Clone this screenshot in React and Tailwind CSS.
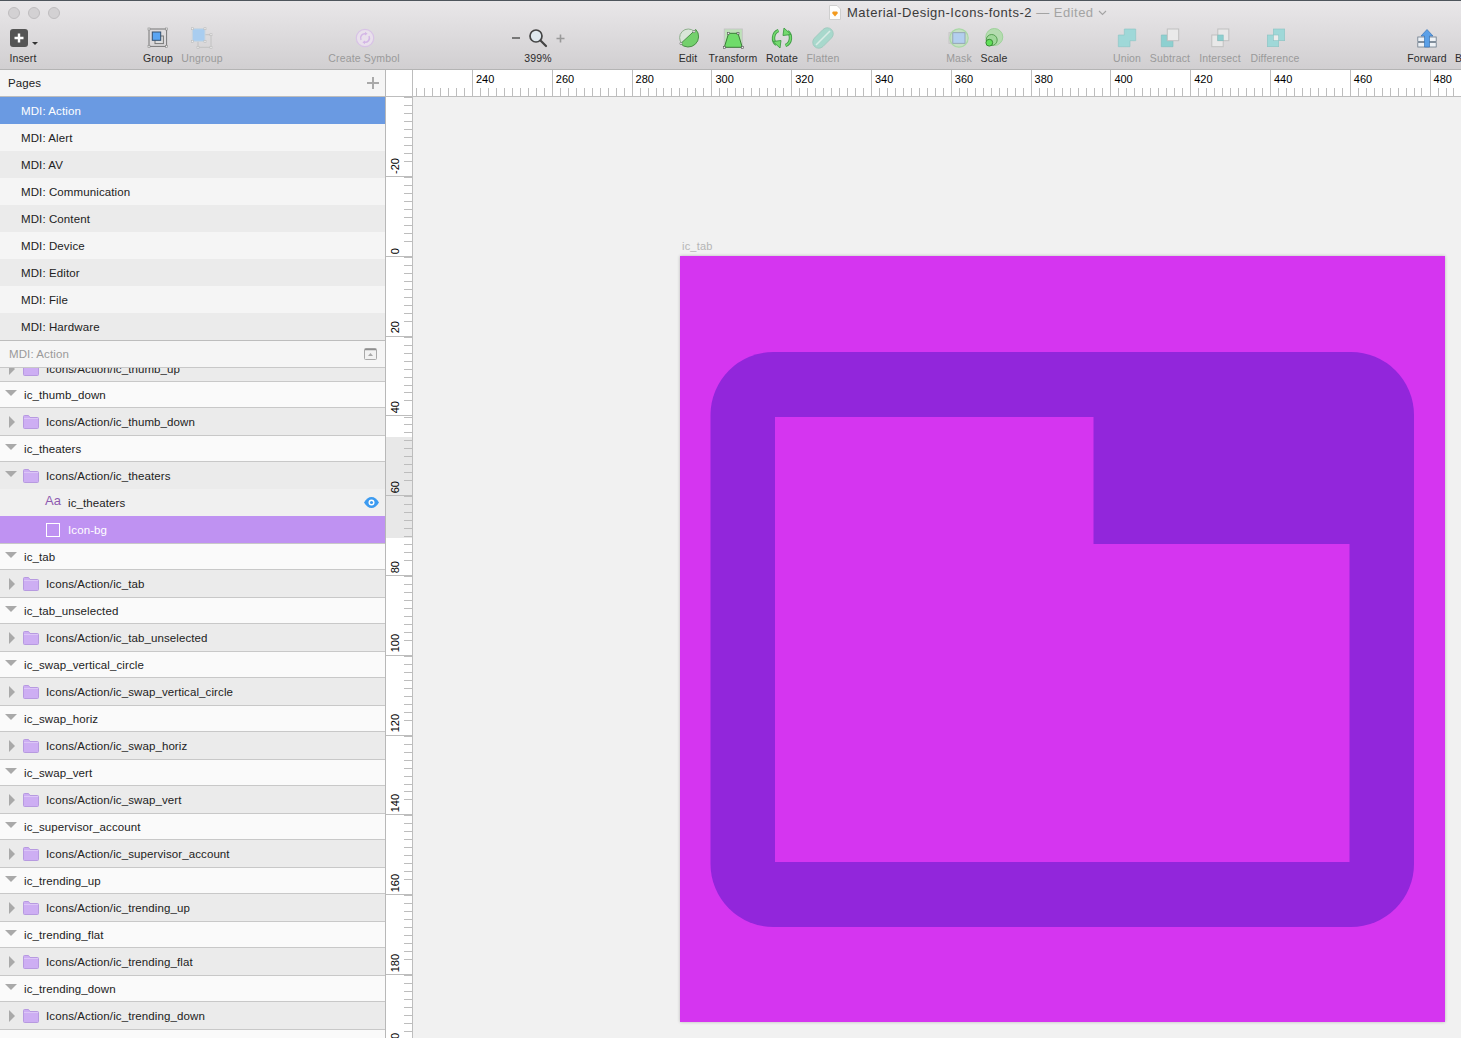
import React from "react";

const font = "font-['Liberation_Sans',Arial,sans-serif]";

const pages = ["MDI: Action", "MDI: Alert", "MDI: AV", "MDI: Communication", "MDI: Content", "MDI: Device", "MDI: Editor", "MDI: File", "MDI: Hardware"];

const layersBefore = ["ic_thumb_down"];
const layersAfter = ["ic_tab", "ic_tab_unselected", "ic_swap_vertical_circle", "ic_swap_horiz", "ic_swap_vert", "ic_supervisor_account", "ic_trending_up", "ic_trending_flat", "ic_trending_down"];

const Handle = ({ x, y, c = "#8a8a8a" }) => <rect x={x - 1} y={y - 1} width="2" height="2" fill="#eee" stroke={c} strokeWidth="0.6" />;

const InsertIcon = () => (
  <svg width="30" height="24" viewBox="0 0 30 24">
    <rect x="2" y="3" width="18" height="18" rx="3" fill="#555" />
    <path d="M11 7.5v9M6.5 12h9" stroke="#fff" strokeWidth="2.4" />
    <path d="M24 16h6l-3 3z" fill="#333" />
  </svg>
);

const GroupIcon = () => (
  <svg width="24" height="24" viewBox="0 0 24 24">
    <rect x="3" y="3" width="17.6" height="17.4" fill="none" stroke="#777" />
    <rect x="9" y="10" width="8.4" height="7.6" fill="#ddd" stroke="#777" />
    <rect x="6.3" y="6" width="8.4" height="8.3" fill="#5aa5f2" stroke="#35506e" />
    <Handle x={3} y={3} /><Handle x={20.6} y={3} /><Handle x={3} y={20.4} /><Handle x={20.6} y={20.4} />
  </svg>
);

const UngroupIcon = () => (
  <svg width="24" height="24" viewBox="0 0 24 24">
    <rect x="8" y="8.7" width="13" height="12.6" fill="none" stroke="#c2c2c2" />
    <rect x="2.3" y="2.7" width="12.7" height="12.6" fill="#a9cdf0" stroke="#c9d4de" />
    <Handle x={2.3} y={2.7} c="#bbb" /><Handle x={15} y={2.7} c="#bbb" /><Handle x={2.3} y={15.3} c="#bbb" /><Handle x={15} y={15.3} c="#bbb" />
    <Handle x={21} y={8.7} c="#bbb" /><Handle x={8} y={21.3} c="#bbb" /><Handle x={21} y={21.3} c="#bbb" />
  </svg>
);

const SymbolIcon = () => (
  <svg width="24" height="24" viewBox="0 0 24 24" fill="none">
    <circle cx="13" cy="12" r="8.7" fill="#e9e0ec" stroke="#d8c3e6" strokeWidth="1.2" />
    <path d="M9 14a4.4 4.4 0 0 1 5-6.2M17 10a4.4 4.4 0 0 1-5 6.2" stroke="#d3b6e6" strokeWidth="1.5" />
    <path d="M13 5.8l2.6 2-2.6 1.8zM13 18.2l-2.6-2 2.6-1.8z" fill="#d3b6e6" />
  </svg>
);

const ZoomIcon = () => (
  <div className="flex items-center h-6 text-[#777]">
    <div className="w-2 h-0.5 bg-[#777]" />
    <svg className="mx-2" width="20" height="20" viewBox="0 0 20 20" fill="none">
      <circle cx="8" cy="8" r="6" fill="#dfe8ee" stroke="#444" strokeWidth="1.7" />
      <path d="M12.5 12.5l5.5 5.5" stroke="#444" strokeWidth="2.2" strokeLinecap="round" />
    </svg>
    <svg width="9" height="9" viewBox="0 0 9 9"><path d="M4.5 0.5v8M0.5 4.5h8" stroke="#999" strokeWidth="1.6" /></svg>
  </div>
);

const EditIcon = () => (
  <svg width="24" height="24" viewBox="0 0 24 24">
    <circle cx="12.3" cy="11.7" r="8.7" fill="#d9e6d8" stroke="#8fb08d" strokeWidth="1" />
    <path d="M4.6 17.7L19.8 3.5A8.7 8.7 0 0 1 4.6 17.7z" fill="#73d06c" stroke="#4a8f47" strokeWidth="1" />
    <circle cx="5" cy="17.5" r="1.2" fill="#eee" stroke="#666" strokeWidth="0.6" />
    <circle cx="18" cy="5.5" r="1.2" fill="#eee" stroke="#666" strokeWidth="0.6" />
  </svg>
);

const TransformIcon = () => (
  <svg width="24" height="24" viewBox="0 0 24 24">
    <rect x="3.3" y="3" width="18" height="18.3" fill="#bde2b8" stroke="#c5c5c5" />
    <path d="M7.6 7.3h9.4l4.3 14H3.3z" fill="#6fdc6a" stroke="#2f6f2d" strokeWidth="0.9" />
    <Handle x={7.6} y={7.3} c="#555" /><Handle x={17} y={7.3} c="#555" /><Handle x={3.3} y={21.3} c="#555" /><Handle x={21.3} y={21.3} c="#555" />
  </svg>
);

const RotateIcon = () => (
  <svg width="24" height="24" viewBox="0 0 24 24" fill="none">
    <path d="M8.5 4.5C2.5 7 2 15 6.5 18.5" stroke="#3f9b45" strokeWidth="3.4" />
    <path d="M8.5 4.5C2.5 7 2 15 6.5 18.5" stroke="#74da6e" strokeWidth="1.6" />
    <path d="M3 15.5l8 -1l-1 7.5z" fill="#74da6e" stroke="#3f9b45" strokeWidth="0.9" />
    <path d="M15.5 19.5C21.5 17 22 9 17.5 5.5" stroke="#3f9b45" strokeWidth="3.4" />
    <path d="M15.5 19.5C21.5 17 22 9 17.5 5.5" stroke="#74da6e" strokeWidth="1.6" />
    <path d="M21 8.5l-8 1l1 -7.5z" fill="#74da6e" stroke="#3f9b45" strokeWidth="0.9" />
  </svg>
);

const FlattenIcon = () => (
  <svg width="24" height="24" viewBox="0 0 24 24">
    <rect x="0" y="6" width="24" height="12" rx="6" transform="rotate(-45 12 12)" fill="#a8d8cc" stroke="#9cc8bc" strokeWidth="0.8" />
    <path d="M5 19L19 5" stroke="#d9ece6" strokeWidth="1.6" />
  </svg>
);

const MaskIcon = () => (
  <svg width="24" height="24" viewBox="0 0 24 24">
    <rect x="2" y="6.7" width="14" height="10.6" fill="#ddd" stroke="#c5c5c5" />
    <circle cx="12" cy="12" r="9.2" fill="#c6e0c4" stroke="#a9d8a6" strokeWidth="1.2" />
    <rect x="5.8" y="6.7" width="12.2" height="10.6" fill="#b3cfee" stroke="#8a9bae" strokeWidth="0.8" />
  </svg>
);

const ScaleIcon = () => (
  <svg width="24" height="24" viewBox="0 0 24 24">
    <circle cx="12.3" cy="11" r="8.5" fill="#b5dcb0" stroke="#9ed29a" />
    <circle cx="9.7" cy="14" r="5.5" fill="#a0d89a" stroke="#4e9a4a" strokeWidth="0.9" />
    <circle cx="7.3" cy="16.7" r="3.4" fill="#62e05a" stroke="#2f7f2c" strokeWidth="0.9" />
  </svg>
);

const UnionIcon = () => (
  <svg width="24" height="24" viewBox="0 0 24 24">
    <path d="M9.3 3h11.4v11.7H15v6H3.3V9h6z" fill="#9fd8d8" stroke="#8cc4c4" strokeWidth="0.6" />
  </svg>
);

const SubtractIcon = () => (
  <svg width="24" height="24" viewBox="0 0 24 24">
    <path d="M3.3 9h6v5.7H15v6H3.3z" fill="#8dd0d0" stroke="#7fbcbc" strokeWidth="0.6" />
    <rect x="9.3" y="3" width="11.4" height="11.7" fill="#eaeaea" stroke="#c0c0c0" />
  </svg>
);

const IntersectIcon = () => (
  <svg width="24" height="24" viewBox="0 0 24 24">
    <rect x="3.8" y="9" width="11.4" height="11.7" fill="#e8e8e8" stroke="#c0c0c0" />
    <rect x="9.8" y="3" width="11" height="11.7" fill="#e8e8e8" stroke="#c0c0c0" />
    <rect x="9.8" y="9" width="5.4" height="5.7" fill="#8dd0d0" stroke="#7fbcbc" strokeWidth="0.6" />
  </svg>
);

const DifferenceIcon = () => (
  <svg width="24" height="24" viewBox="0 0 24 24">
    <rect x="4.3" y="9" width="11.4" height="11.7" fill="#9fd8d8" stroke="#8cc4c4" strokeWidth="0.6" />
    <rect x="10.3" y="3" width="11.4" height="11.7" fill="#9fd8d8" stroke="#8cc4c4" strokeWidth="0.6" />
    <rect x="10.3" y="9" width="5.4" height="5.7" fill="#ececec" stroke="#8cc4c4" strokeWidth="0.6" />
  </svg>
);

const ForwardIcon = () => (
  <svg width="24" height="24" viewBox="0 0 24 24">
    <rect x="2.8" y="11" width="18.4" height="4.4" fill="#eef2f6" stroke="#6a7a8a" strokeWidth="0.8" />
    <rect x="2.8" y="16.6" width="18.4" height="4.4" fill="#eef2f6" stroke="#6a7a8a" strokeWidth="0.8" />
    <path d="M12 3.5l6 6.5h-3.5v11h-5V10H6z" fill="#5aa0e8" stroke="#3a74b4" strokeWidth="0.7" />
  </svg>
);

const ToolItem = ({ label, w, ml, dim, children }) => (
  <div className={`${w} ${ml} shrink-0 flex flex-col items-center`}>
    <div className="h-6 flex items-center justify-center">{children}</div>
    <div className={`mt-px text-[10.5px] leading-[14px] tracking-[0.15px] whitespace-nowrap ${dim ? "text-[#9a9a9a]" : "text-[#2c2c2c]"}`}>{label}</div>
  </div>
);

const Toolbar = () => (
  <div className="h-[70px] shrink-0 border-b border-[#b4b4b4] border-t border-t-[#4e555c] bg-gradient-to-b from-[#e9e7e9] to-[#d1cfd1] overflow-hidden">
    <div className="h-[25px] flex items-center">
      <div className="flex gap-2 ml-2 -mt-0.5">
        <div className="w-3 h-3 rounded-full bg-[#d3d1d3] border border-[#bfbdbf]" />
        <div className="w-3 h-3 rounded-full bg-[#d3d1d3] border border-[#bfbdbf]" />
        <div className="w-3 h-3 rounded-full bg-[#d3d1d3] border border-[#bfbdbf]" />
      </div>
      <svg className="ml-[769px] -mt-0.5" width="12" height="15" viewBox="0 0 12 15">
        <path d="M0.5 0.5h7.5l3.5 3.5v10.500h-11z" fill="#fdfdfd" stroke="#cfcfcf" />
        <path d="M3 8l1-1.500h4l1 1.500l-3 3.500z" fill="#f39a1d" />
      </svg>
      <div className="ml-[6px] -mt-0.5 text-[13px] tracking-[0.5px] text-[#3a3a3a] whitespace-nowrap">
        Material-Design-Icons-fonts-2 <span className="text-[#a3a3a3]">— Edited</span>
      </div>
      <svg className="ml-1 -mt-0.5" width="9" height="6" viewBox="0 0 9 6" fill="none"><path d="M1 1l3.500 3.500L8 1" stroke="#a3a3a3" strokeWidth="1.1" /></svg>
    </div>
    <div className="flex">
      <ToolItem label="Insert" w="w-[46px]" ml=""><InsertIcon /></ToolItem>
      <ToolItem label="Group" w="w-[44px]" ml="ml-[90px]"><GroupIcon /></ToolItem>
      <ToolItem label="Ungroup" w="w-[44px]" dim><UngroupIcon /></ToolItem>
      <ToolItem label="Create Symbol" w="w-[80px]" ml="ml-[100px]" dim><SymbolIcon /></ToolItem>
      <ToolItem label="399%" w="w-[60px]" ml="ml-[104px]"><ZoomIcon /></ToolItem>
      <ToolItem label="Edit" w="w-[30px]" ml="ml-[105px]"><EditIcon /></ToolItem>
      <ToolItem label="Transform" w="w-[60px]"><TransformIcon /></ToolItem>
      <ToolItem label="Rotate" w="w-[38px]"><RotateIcon /></ToolItem>
      <ToolItem label="Flatten" w="w-[44px]" dim><FlattenIcon /></ToolItem>
      <ToolItem label="Mask" w="w-[36px]" ml="ml-[96px]" dim><MaskIcon /></ToolItem>
      <ToolItem label="Scale" w="w-[34px]"><ScaleIcon /></ToolItem>
      <ToolItem label="Union" w="w-[40px]" ml="ml-[96px]" dim><UnionIcon /></ToolItem>
      <ToolItem label="Subtract" w="w-[46px]" dim><SubtractIcon /></ToolItem>
      <ToolItem label="Intersect" w="w-[54px]" dim><IntersectIcon /></ToolItem>
      <ToolItem label="Difference" w="w-[56px]" dim><DifferenceIcon /></ToolItem>
      <ToolItem label="Forward" w="w-[48px]" ml="ml-[100px]"><ForwardIcon /></ToolItem>
      <div className="ml-1 mt-[25px] text-[10.5px] leading-[14px] text-[#2c2c2c]">Backward</div>
    </div>
  </div>
);

const Folder = () => (
  <svg className="shrink-0" width="16" height="14" viewBox="0 0 16 14">
    <path d="M0.500 1.500a1 1 0 0 1 1-1h4l1.500 2h7.500a1 1 0 0 1 1 1v9a1 1 0 0 1-1 1h-13a1 1 0 0 1-1-1z" fill="#cdaef3" stroke="#b79ae0" />
    <path d="M1 3.500h14" stroke="#dcc6f7" />
  </svg>
);

const TriDown = ({ className = "" }) => (
  <svg className={`shrink-0 ${className}`} width="12" height="6" viewBox="0 0 12 6"><path d="M0 0h12l-6 6z" fill="#a9a9a9" /></svg>
);

const TriRight = () => (
  <svg className="shrink-0 ml-[9px] mr-2" width="6" height="12" viewBox="0 0 6 12"><path d="M0 0l6 6l-6 6z" fill="#a9a9a9" /></svg>
);

const Label = ({ className = "", children }) => <span className={`mt-[2px] ${className}`}>{children}</span>;

const ArtboardRow = ({ name }) => (
  <div className="h-[26px] flex items-center bg-[#fafafa] border-b border-[#c8c8c8] pl-[5px]">
    <TriDown className="mr-[7px] -mt-1" />
    <Label>{name}</Label>
  </div>
);

const GroupRow = ({ name, open, last = true }) => (
  <div className={`${last ? "h-[28px] border-b border-[#c8c8c8]" : "h-[27px]"} flex items-center bg-[#ebebeb] shrink-0`}>
    {open ? <TriDown className="ml-[5px] mr-[6px] -mt-1" /> : <TriRight />}
    <Folder />
    <Label className="ml-[7px]">Icons/Action/{name}</Label>
  </div>
);

const Sidebar = () => (
  <div className="w-[386px] shrink-0 border-r border-[#b8b8b8] bg-[#f5f5f5] overflow-hidden text-[11.5px] tracking-[0.1px] text-[#222]">
    <div className="h-[27px] flex items-center justify-between pl-2 pr-[6px] border-b border-[#bdbdbd]">
      <Label>Pages</Label>
      <svg width="12" height="12" viewBox="0 0 12 12"><path d="M6 0v12M0 6h12" stroke="#a9a9a9" strokeWidth="2" /></svg>
    </div>
    <div className="border-b border-[#bdbdbd]">
      {pages.map((p, i) => (
        <div key={p} className={`h-[27px] flex items-center pl-[21px] ${i === 0 ? "bg-[#6a9ae2] text-white" : i % 2 ? "bg-[#f5f5f5]" : "bg-[#ebebeb]"}`}>
          <Label>{p}</Label>
        </div>
      ))}
    </div>
    <div className="h-[27px] flex items-center justify-between pl-[9px] pr-2 border-b border-[#c8c8c8] text-[#9a9a9a]">
      <Label>MDI: Action</Label>
      <svg width="13" height="12" viewBox="0 0 13 12">
        <rect x="0.500" y="0.500" width="12" height="11" rx="1" fill="#f2f2f2" stroke="#a9a9a9" />
        <path d="M1 1.500h11" stroke="#8f8f8f" strokeWidth="1.500" />
        <path d="M4 8l2.500-3L9 8z" fill="#a9a9a9" />
      </svg>
    </div>
    <div className="h-[14px] overflow-hidden bg-[#ebebeb] border-b border-[#c8c8c8]">
      <div className="-mt-[13px] h-[27px] flex items-center">
        <TriRight />
        <Folder />
        <Label className="ml-[7px]">Icons/Action/ic_thumb_up</Label>
      </div>
    </div>
    {layersBefore.map((n) => (
      <React.Fragment key={n}>
        <ArtboardRow name={n} />
        <GroupRow name={n} />
      </React.Fragment>
    ))}
    <ArtboardRow name="ic_theaters" />
    <GroupRow name="ic_theaters" open last={false} />
    <div className="h-[27px] flex items-center bg-[#f0f0f0]">
      <span className="ml-[45px] w-[23px] text-[13px] leading-none font-medium text-[#8e5bb0] -mt-1">Aa</span>
      <Label>ic_theaters</Label>
      <svg className="ml-auto mr-[6px]" width="15" height="11" viewBox="0 0 15 11">
        <path d="M0 5.500C2 2 4.500 0 7.500 0S13 2 15 5.500C13 9 10.500 11 7.500 11S2 9 0 5.500z" fill="#3d9bf0" />
        <circle cx="7.500" cy="5.500" r="3" fill="#fff" />
        <circle cx="7.500" cy="5.500" r="1.600" fill="#3d9bf0" />
      </svg>
    </div>
    <div className="h-[28px] flex items-center bg-[#bf92f2] border-b border-[#c8c8c8] text-white">
      <div className="ml-[46px] w-[14px] h-[14px] border border-white" />
      <Label className="ml-2">Icon-bg</Label>
    </div>
    {layersAfter.map((n) => (
      <React.Fragment key={n}>
        <ArtboardRow name={n} />
        <GroupRow name={n} />
      </React.Fragment>
    ))}
    <div className="h-[26px] bg-[#fafafa]" />
  </div>
);

const hLabels = [240, 260, 280, 300, 320, 340, 360, 380, 400, 420, 440, 460, 480];
const vLabels = [-20, 0, 20, 40, 60, 80, 100, 120, 140, 160, 180, 200];
const nine = [1, 2, 3, 4, 5, 6, 7, 8, 9];

const HRuler = () => (
  <div className="h-[27px] shrink-0 flex bg-white border-b border-[#bdbdbd] overflow-hidden">
    <div className="w-[27px] shrink-0 border-r border-[#bdbdbd]" />
    <div className="w-[59px] shrink-0 flex justify-end items-end">
      {[1, 2, 3, 4, 5, 6, 7].map((t) => <div key={t} className="w-[7.98px] h-2 border-l border-[#bdbdbd]" />)}
    </div>
    {hLabels.map((v) => (
      <div key={v} className="w-[79.8px] shrink-0 border-l border-[#bdbdbd] flex flex-col">
        <div className="h-[18px] pl-[3px] pt-[2px] text-[11px] leading-[14px] text-black">{v}</div>
        <div className="flex h-2">
          <div className="w-[6.98px] shrink-0" />
          {nine.map((t) => <div key={t} className="w-[7.98px] shrink-0 border-l border-[#bdbdbd]" />)}
        </div>
      </div>
    ))}
  </div>
);

const VRuler = () => (
  <div className="relative w-[27px] shrink-0 bg-white border-r border-[#bdbdbd] overflow-hidden">
    <div className="absolute left-0 right-0 top-[340px] h-[101px] bg-[#e8e8e8]" />
    <div className="relative">
      {vLabels.map((v, i) => (
        <div key={v} className={`${i === 0 ? "h-[80px]" : "h-[79.8px]"} flex justify-end border-b border-[#bdbdbd]`}>
          <div className="flex-1 flex items-end justify-center pb-[2px]">
            <span className="[writing-mode:vertical-rl] rotate-180 text-[11px] leading-[14px] text-black">{v}</span>
          </div>
          <div className="w-2 flex flex-col justify-end">
            {nine.map((t) => <div key={t} className="h-[7.98px] shrink-0 border-t border-[#bdbdbd] last:mb-[6.98px]" />)}
          </div>
        </div>
      ))}
    </div>
  </div>
);

const Canvas = () => (
  <div className="relative flex-1 bg-[#f1f1f1] overflow-hidden">
    <div className="absolute left-[269px] top-[142px] text-[11px] tracking-[0.2px] leading-[14px] text-[#b5b5b5]">ic_tab</div>
    <div className="absolute left-[267px] top-[159px] w-[765px] h-[766px] bg-[#d535f0] shadow-[0_0_3px_rgba(0,0,0,0.25)]">
      <svg width="765" height="766" viewBox="0 0 765 766">
        <rect x="30.500" y="96" width="703.500" height="575" rx="63" fill="#9226db" />
        <path d="M95 161H413.500V288H669.500V606H95Z" fill="#d535f0" />
      </svg>
    </div>
  </div>
);

export default function App() {
  return (
    <div className={`w-[1461px] h-[1038px] overflow-hidden flex flex-col ${font}`}>
      <Toolbar />
      <div className="flex flex-1 min-h-0">
        <Sidebar />
        <div className="flex-1 min-w-0 flex flex-col">
          <HRuler />
          <div className="flex flex-1 min-h-0">
            <VRuler />
            <Canvas />
          </div>
        </div>
      </div>
    </div>
  );
}
